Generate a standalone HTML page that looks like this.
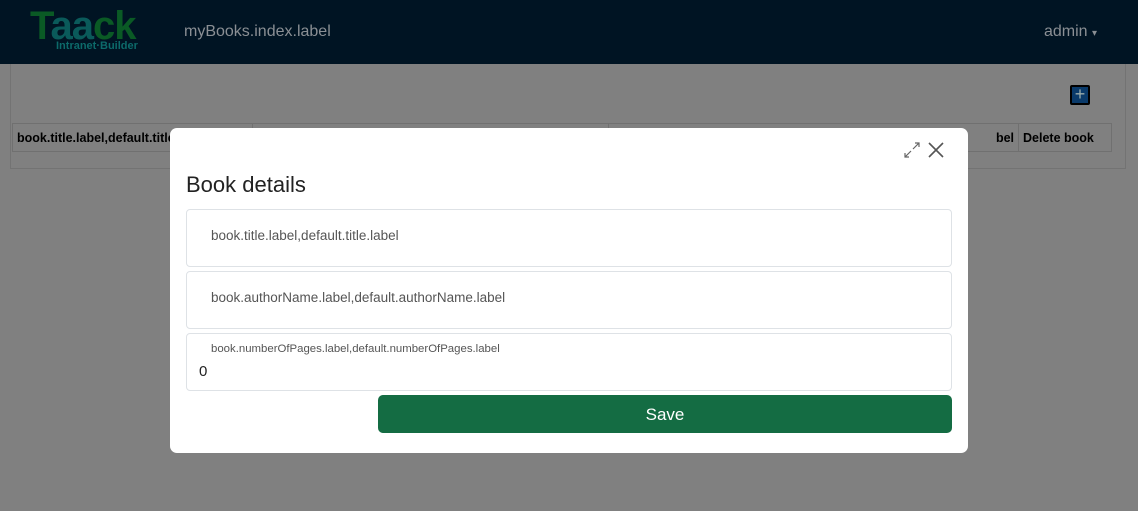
<!DOCTYPE html>
<html><head><style>
*{box-sizing:border-box;margin:0;padding:0}
body{width:1138px;height:511px;overflow:hidden;background:#808080;font-family:"Liberation Sans",sans-serif;position:relative}
.nav{position:absolute;left:0;top:0;width:1138px;height:64px;background:#001423}
.logo{position:absolute;left:30px;top:4px;font-weight:bold;font-size:40px;letter-spacing:-1px;line-height:44px}
.sub{position:absolute;left:56px;top:40px;font-size:11px;font-weight:bold;color:#0c6a6a}
.title{position:absolute;left:184px;top:23px;font-size:16px;color:#8a8f94}
.admin{position:absolute;left:1044px;top:23px;font-size:16px;color:#8a8f94}
.panel{position:absolute;left:10px;top:64px;width:1116px;height:105px;border:1px solid #737373;border-top:none}
.plus{position:absolute;left:1070px;top:85px;width:20px;height:20px;background:#0a3a6a;border:2px solid #000;border-radius:2px;color:#9aa;font-size:18px;line-height:14px;text-align:center}
.th{position:absolute;top:123px;height:29px;border:1px solid #707070;font-size:12.5px;font-weight:bold;color:#000;padding:7px 4px;white-space:nowrap;overflow:hidden}
.modal{position:absolute;left:170px;top:128px;width:798px;height:325px;background:#fff;border-radius:7px}
.field{position:absolute;left:16px;width:766px;height:58px;border:1px solid #dee2e6;border-radius:4px;font-size:13.5px;color:#555}
.btn{position:absolute;left:208px;top:267px;width:574px;height:38px;background:#146c43;border-radius:5px;color:#fff;font-size:17px;text-align:center;line-height:39px}
</style></head><body>
<div class="nav">
<div class="logo"><span style="color:#0a5a25">T</span><span style="color:#0a5a5a">aa</span><span style="color:#0a5a25">ck</span></div>
<div class="sub">Intranet·Builder</div>
<div class="title">myBooks.index.label</div>
<div class="admin">admin <span style="font-size:10px">▾</span></div>
</div>
<div class="panel"></div>
<div class="plus">+</div>
<div class="th" style="left:12px;width:241px">book.title.label,default.title.label</div>
<div class="th" style="left:252px;width:357px"></div>
<div class="th" style="left:608px;width:411px;text-align:right">bel</div>
<div class="th" style="left:1018px;width:94px">Delete book</div>
<div class="modal">
<svg style="position:absolute;left:732px;top:12px" width="20" height="20" viewBox="0 0 20 20" stroke="#666" stroke-width="1.2" fill="none"><path d="M11 9L17 3M13 3h4v4M9 11L3 17M3 13v4h4"/></svg>
<svg style="position:absolute;left:756px;top:12px" width="20" height="20" viewBox="0 0 20 20" stroke="#555" stroke-width="1.6"><path d="M3 3L17 17M17 3L3 17"/></svg>
<div style="position:absolute;left:16px;top:44px;font-size:22px;color:#222">Book details</div>
<div class="field" style="top:81px"><div style="position:absolute;left:24px;top:18px">book.title.label,default.title.label</div></div>
<div class="field" style="top:143px"><div style="position:absolute;left:24px;top:18px">book.authorName.label,default.authorName.label</div></div>
<div class="field" style="top:205px"><div style="position:absolute;left:24px;top:9px;font-size:11.4px">book.numberOfPages.label,default.numberOfPages.label</div><div style="position:absolute;left:12px;top:29px;font-size:15px;color:#222">0</div></div>
<div class="btn">Save</div>
</div>
</body></html>
